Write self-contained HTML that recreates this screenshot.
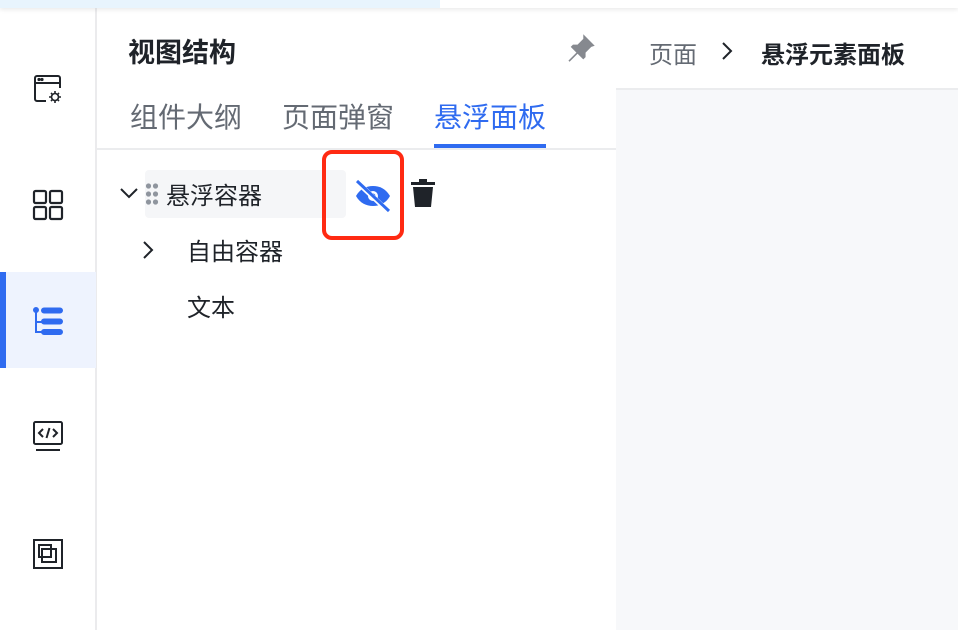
<!DOCTYPE html>
<html><head><meta charset="utf-8"><style>
*{margin:0;padding:0;box-sizing:border-box}
body{width:958px;height:630px;overflow:hidden;background:#fff;font-family:"Liberation Sans","Noto Sans CJK SC",sans-serif;position:relative}
.top{position:absolute;left:0;top:0;width:958px;height:8px;background:#fff;box-shadow:0 2px 4px rgba(0,0,0,.08);z-index:3}
.top i{position:absolute;left:0;top:0;width:440px;height:8px;background:#e8f4fd}
.side{position:absolute;left:0;top:8px;width:97px;height:622px;background:#fff;border-right:2px solid #ebebed}
.act{position:absolute;left:0;top:264px;width:96px;height:96px;background:#eef3fe}
.act:before{content:"";position:absolute;left:0;top:0;width:6px;height:96px;background:#2f6bf0}
.ic{position:absolute;left:32px}
.panel{position:absolute;left:97px;top:8px;width:519px;height:622px;background:#fff}
.right{position:absolute;left:616px;top:8px;width:342px;height:622px;background:#f7f8fa}
.hdr{position:absolute;left:0;top:0;width:342px;height:82px;background:#fff;border-bottom:2px solid #ebecee}
.t{position:absolute;white-space:nowrap}
</style></head><body>
<div class="top"><i></i></div>
<div class="side">
<svg class="ic" style="top:65px" width="32" height="32" viewBox="0 0 32 32" fill="none" stroke="#1f2329" stroke-width="2"><path d="M14 28H5a2 2 0 0 1-2-2V5a2 2 0 0 1 2-2h21a2 2 0 0 1 2 2v10M3 10h25"/><circle cx="7" cy="6.5" r=".6" fill="#1f2329"/><circle cx="10" cy="6.5" r=".6" fill="#1f2329"/><circle cx="23" cy="24" r="3.5" stroke-width="1.6"/><path d="M23 18v2M23 28v2M17 24h2M27 24h2M19 20l1.4 1.4M25.6 26.6L27 28M19 28l1.4-1.4M25.6 21.4L27 20" stroke-width="1.6"/></svg>
<svg class="ic" style="top:181px" width="32" height="32" viewBox="0 0 32 32" fill="none" stroke="#1f2329" stroke-width="2.2"><rect x="2" y="2" width="12" height="12" rx="1.5"/><rect x="18" y="2" width="12" height="12" rx="1.5"/><rect x="2" y="18" width="12" height="12" rx="1.5"/><rect x="18" y="18" width="12" height="12" rx="1.5"/></svg>
<div class="act"></div>
<svg class="ic" style="top:298px" width="32" height="32" viewBox="0 0 32 32" fill="none" stroke="#2f6bf0" stroke-width="2"><circle cx="4" cy="4" r="2" fill="#2f6bf0"/><path d="M4 6v20h6M4 16h6"/><rect x="10" y="2.5" width="20" height="4" rx="2" fill="#2f6bf0"/><rect x="10" y="13.5" width="20" height="4" rx="2" fill="#2f6bf0"/><rect x="10" y="24" width="20" height="4" rx="2" fill="#2f6bf0"/></svg>
<svg class="ic" style="top:412px" width="32" height="32" viewBox="0 0 32 32" fill="none" stroke="#1f2329" stroke-width="2"><rect x="2" y="2" width="28" height="22" rx="1.5"/><path d="M4 30h24M11 9l-4 4 4 4M21 9l4 4-4 4M17.5 8l-3 10"/></svg>
<svg class="ic" style="top:530px" width="32" height="32" viewBox="0 0 32 32" fill="none" stroke="#1f2329" stroke-width="2"><rect x="2" y="2" width="28" height="28"/><rect x="7" y="7" width="12" height="12"/><rect x="10" y="11" width="14" height="13"/></svg>
</div>
<div class="panel">
<div class="t" style="left:31px;top:23px;font-size:27px;font-weight:bold;color:#1f2329">视图结构</div>
<svg style="position:absolute;left:468px;top:24px" width="32" height="32" viewBox="0 0 28 28"><path d="M16 2l10 10-3 1-5 5 0 4-2 2-5-5-7 7-1-1 7-7-5-5 2-2 4 0 5-5z" fill="#86898f"/></svg>
<div class="t" style="left:33px;top:88px;font-size:28px;color:#646a73">组件大纲</div>
<div class="t" style="left:185px;top:88px;font-size:28px;color:#646a73">页面弹窗</div>
<div class="t" style="left:337px;top:88px;font-size:28px;color:#2f6bf0">悬浮面板</div>
<div style="position:absolute;left:337px;top:136px;width:112px;height:4px;background:#2f6bf0"></div>
<div style="position:absolute;left:0;top:140px;width:519px;height:2px;background:#ebecee"></div>
<div style="position:absolute;left:48px;top:162px;width:201px;height:48px;background:#f5f6f8;border-radius:4px"></div>
<svg style="position:absolute;left:22px;top:178px" width="20" height="14" viewBox="0 0 20 14"><path d="M2 3l8 8 8-8" fill="none" stroke="#1f2329" stroke-width="2"/></svg>
<svg style="position:absolute;left:48px;top:174px" width="14" height="28"><g fill="#8f959e"><circle cx="3.5" cy="4" r="2.6"/><circle cx="10.5" cy="4" r="2.6"/><circle cx="3.5" cy="12" r="2.6"/><circle cx="10.5" cy="12" r="2.6"/><circle cx="3.5" cy="20" r="2.6"/><circle cx="10.5" cy="20" r="2.6"/></g></svg>
<div class="t" style="left:69px;top:168px;font-size:24px;color:#1f2329">悬浮容器</div>
<div style="position:absolute;left:225px;top:142px;width:82px;height:90px;border:4px solid #ff2a12;border-radius:10px"></div>
<svg style="position:absolute;left:256px;top:170px" width="40" height="36" viewBox="0 0 40 36"><path d="M3 18c4-7 10-10 17-10s13 3 17 10c-4 7-10 10-17 10S7 25 3 18z" fill="#2f6bf0"/><circle cx="20" cy="18" r="5" fill="#fff"/><circle cx="20" cy="18" r="2.5" fill="#2f6bf0"/><path d="M4 4l32 30" stroke="#fff" stroke-width="5"/><path d="M4 3l32 30" stroke="#2f6bf0" stroke-width="3"/></svg>
<svg style="position:absolute;left:313px;top:170px" width="26" height="30" viewBox="0 0 26 30"><path d="M9 1h8v3h8v3H1V4h8z M3 9h20l-2 20H5z" fill="#1f2329"/></svg>
<svg style="position:absolute;left:44px;top:232px" width="14" height="20" viewBox="0 0 14 20"><path d="M3 2l8 8-8 8" fill="none" stroke="#1f2329" stroke-width="2"/></svg>
<div class="t" style="left:90px;top:224px;font-size:24px;color:#1f2329">自由容器</div>
<div class="t" style="left:90px;top:280px;font-size:24px;color:#1f2329">文本</div>
</div>
<div class="right">
<div class="hdr">
<div class="t" style="left:33px;top:27px;font-size:24px;color:#646a73">页面</div>
<svg style="position:absolute;left:104px;top:33px" width="14" height="20" viewBox="0 0 14 20"><path d="M3 2l8 8-8 8" fill="none" stroke="#1f2329" stroke-width="2"/></svg>
<div class="t" style="left:145px;top:27px;font-size:24px;font-weight:bold;color:#1f2329">悬浮元素面板</div>
</div>
</div>
</body></html>
